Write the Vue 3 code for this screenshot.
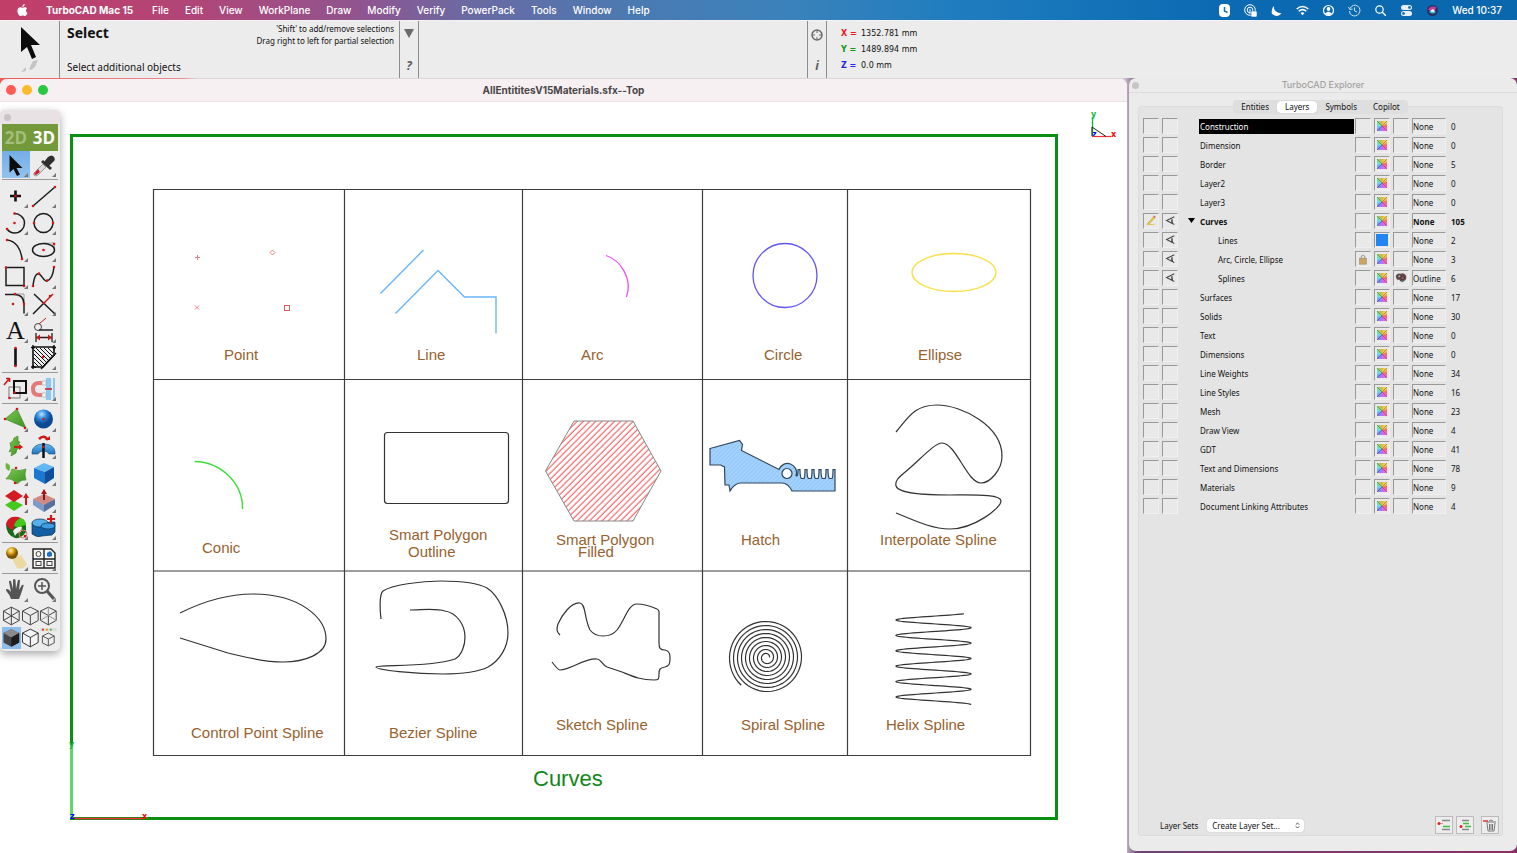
<script setup>
import { ref, computed } from 'vue'

const menus = ['File', 'Edit', 'View', 'WorkPlane', 'Draw', 'Modify', 'Verify', 'PowerPack', 'Tools', 'Window', 'Help']

const coords = [
    { axis: 'X', value: '1352.781 mm', color: 'red' },
    { axis: 'Y', value: '1489.894 mm', color: 'green' },
    { axis: 'Z', value: '0.0 mm', color: 'blue' }
]

const tabs = ['Entities', 'Layers', 'Symbols', 'Copilot']
const activeTab = ref('Layers')
const selectedLayer = ref('Construction')
const selectedTool = ref('Select')
const layerSet = ref('create')

//Layer tree, flattened
const layers = [
    { name: 'Construction', count: 0 },
    { name: 'Dimension', count: 0 },
    { name: 'Border', count: 5 },
    { name: 'Layer2', count: 0 },
    { name: 'Layer3', count: 0 },
    { name: 'Curves', count: 105, open: true, edit: true, visible: true },
    { name: 'Lines', count: 2, child: true, visible: true, solid: true },
    { name: 'Arc, Circle, Ellipse', count: 3, child: true, visible: true, locked: true },
    { name: 'Splines', count: 6, child: true, visible: true, material: true, style: 'Outline' },
    { name: 'Surfaces', count: 17 },
    { name: 'Solids', count: 30 },
    { name: 'Text', count: 0 },
    { name: 'Dimensions', count: 0 },
    { name: 'Line Weights', count: 34 },
    { name: 'Line Styles', count: 16 },
    { name: 'Mesh', count: 23 },
    { name: 'Draw View', count: 4 },
    { name: 'GDT', count: 41 },
    { name: 'Text and Dimensions', count: 78 },
    { name: 'Materials', count: 9 },
    { name: 'Document Linking Attributes', count: 4 }
]

//Captions in drawing units
const captions = [
    { x: 224, y: 360, text: 'Point' },
    { x: 417, y: 360, text: 'Line' },
    { x: 581, y: 360, text: 'Arc' },
    { x: 764, y: 360, text: 'Circle' },
    { x: 918, y: 360, text: 'Ellipse' },
    { x: 202, y: 553, text: 'Conic' },
    { x: 389, y: 540, text: 'Smart Polygon' },
    { x: 408, y: 557, text: 'Outline' },
    { x: 556, y: 545, text: 'Smart Polygon' },
    { x: 578, y: 557, text: 'Filled' },
    { x: 741, y: 545, text: 'Hatch' },
    { x: 880, y: 545, text: 'Interpolate Spline' },
    { x: 191, y: 738, text: 'Control Point Spline' },
    { x: 389, y: 738, text: 'Bezier Spline' },
    { x: 556, y: 730, text: 'Sketch Spline' },
    { x: 741, y: 730, text: 'Spiral Spline' },
    { x: 886, y: 730, text: 'Helix Spline' }
]

const toPath = pts => 'M' + pts.map(p => p[0].toFixed(2) + ' ' + p[1].toFixed(2)).join('L')

const spiral = computed(() => {
    const pts = []
    const end = Math.PI * 17 + 0.88
    for (let a = 0; a <= end; a += 0.12) {
        const r = 3 + 4 * a / (2 * Math.PI)
        pts.push([766.5 + r * Math.cos(a), 657.5 - r * Math.sin(a)])
    }
    return toPath(pts)
})

const helix = computed(() => {
    const pts = []
    for (let t = 0.1; t <= 6.001; t += 0.02) {
        pts.push([933.5 + 37.5 * Math.cos(t * 2 * Math.PI), 612.3 + 15.4 * t])
    }
    return toPath(pts)
})

//Red handle used all over the tool icons
const dot = (x, y) => `<circle cx="${x}" cy="${y}" r="1.3" fill="#d01818"/>`
const ink = 'fill="none" stroke="#1c1c1c" stroke-width="1.5"'

const toolGroups = [
    [
        { name: 'Select', art: '<path d="M7.500 4v17.500l4-3.500 3.500 7 3-1.500-3.500-6.500h6z" fill="#0c0c0c"/>' },
        { name: 'Eyedropper', art: '<path d="M5 21l8-8 3 3-8 8q-3 2-4 0-1-1 1-3z" fill="#d9d9d9" stroke="#777" stroke-width=".7"/><path d="M4 23l4-5 2 3-4 3z" fill="#c8202c"/><path d="M11 11l2-2 9 8-2 2z" fill="#333"/><path d="M14 11l4-5q4-3 6 0 2 3-1 5l-5 5z" fill="#2e2e2e"/>' }
    ],
    [
        { name: 'Point', art: '<path d="M13.500 8.500v11M8 14h11" stroke="#111" stroke-width="2.600"/>' + dot(13.5, 14) },
        { name: 'Line', art: `<path d="M3 24L25 5" ${ink}/>` + dot(3, 24) + dot(25, 5) },
        { name: 'Arc', art: `<path d="M12.500 4.500c5 0 10 4 10 9.500s-4 10-10 10c-4 0-6-2-7.500-4" ${ink}/>` + dot(12.5, 4.500) + dot(5, 20) + dot(12.5, 14) },
        { name: 'Circle', art: `<circle cx="13.500" cy="14" r="9.500" ${ink}/>` + dot(4, 14) + dot(23, 14) },
        { name: 'Conic', art: `<path d="M5 4c9 1 14 9 15 19" ${ink}/>` + dot(5, 4) + dot(20, 23) },
        { name: 'Ellipse', art: `<path d="M14 7h10.500v7" fill="none" stroke="#999" stroke-width=".8"/><ellipse cx="13.500" cy="14" rx="11" ry="6.500" ${ink}/>` + dot(13.5, 14) + dot(24, 8) },
        { name: 'Rectangle', art: `<rect x="4" y="4.500" width="18" height="18" ${ink}/>` + dot(4, 4.500) + dot(22, 23) },
        { name: 'Spline', art: `<path d="M3 23c1-9 3-13 6-12s5 8 8 7 6-5 7-14" ${ink}/>` + dot(3, 23) + dot(9, 10.500) + dot(17, 17.500) + dot(24, 4) },
        { name: 'Fillet', art: `<path d="M14 4h8v7" fill="none" stroke="#999"/><path d="M3 4.500h9q10 0 10 10v9" ${ink}/>` + dot(13, 4) + dot(22, 14) + dot(11, 14) },
        { name: 'Trim', art: `<path d="M4 4l21 20M3 24l11-11" ${ink}/><path d="M14 13l9-9" stroke="#d01818" stroke-width="1.500"/>` + dot(14, 13) + dot(20, 6) },
        { name: 'Text', art: '<text x="4" y="22" font-family="Liberation Serif, serif" font-size="26" fill="#111">A</text>' },
        { name: 'Dimension', art: '<circle cx="8" cy="10" r="3.500" fill="none" stroke="#444"/><path d="M9 7l7-6" stroke="#d01818"/><path d="M9 13h14M6 16v9M22 16v9M6 20.500h16" fill="none" stroke="#222" stroke-width="1.300"/><path d="M6 20.500l4-3v6zM22 20.500l-4-3v6z" fill="#d01818"/>' },
        { name: 'Wall', art: '<path d="M13.500 4v18" stroke="#111" stroke-width="2.600"/>' + dot(13.5, 4) + dot(13.5, 22) },
        { name: 'Hatch', art: '<path d="M3 3h21v8L13 23H3z" fill="#eee" stroke="#111" stroke-width="1.600"/><path d="M4 18l5 5M4 14l8 8M4 10l11 11M4 6l13 13M6 4l13 13M10 4l11 11M14 4l8 8M18 4l5 5" stroke="#111"/><path d="M1 3.500h4M3 1v4M1 23h5M3 21v4M24 1v5M22 3.500h4M11 25l15-16" stroke="#111" stroke-width="1.400"/>' + dot(13, 13) }
    ],
    [
        { name: 'Move', art: '<rect x="7" y="12" width="11" height="11" fill="none" stroke="#777"/><rect x="12" y="6" width="12" height="12" fill="none" stroke="#111" stroke-width="2"/><path d="M2 10l5-6M7.500 7V3.500H4" fill="none" stroke="#d01818" stroke-width="1.600"/>' + dot(12.5, 17.500) + dot(7.500, 23) },
        { name: 'Snap', art: '<path d="M16 3h5v22h-5zM23 3h2v22h-2z" fill="#8cc6f2"/><path d="M12 8H9q-6 0-6 6t6 6h3" fill="none" stroke="#e37979" stroke-width="4"/><path d="M12 6h4v4h-4zM12 18h4v4h-4z" fill="#f4f4f4" stroke="#aaa" stroke-width=".6"/><path d="M15 14h7" stroke="#d01818" stroke-width="1.500"/>' }
    ],
    [
        { name: 'Facet', art: '<path d="M3 13L15 3l9 19z" fill="url(#gGreen)" stroke="#3c7f20" stroke-width=".6"/>' + dot(3, 13) + dot(15, 3) + dot(23, 22) },
        { name: 'Sphere', art: '<circle cx="13.500" cy="13" r="9.500" fill="url(#gBall)"/>' + dot(13.5, 13) },
        { name: 'Extrude', art: '<path d="M8 10l3-2 1-3 4-2v5l2 1-2 3 2 3-3 1-1 4-5 3 1-5-3 1 2-4z" fill="url(#gGreen)" stroke="#3c7f20" stroke-width=".6"/><path d="M12 14h6" stroke="#d01818" stroke-width="2"/><path d="M17 11l4 3-4 3z" fill="#d01818"/>' },
        { name: 'Revolve', art: '<path d="M2 19q1-8 11.500-8T25 19v2h-6q-2-3-5.500-3T8 21H2z" fill="url(#gBlue)" stroke="#174c7c" stroke-width=".6"/><path d="M13.500 10v15" stroke="#111" stroke-width="2.500"/><path d="M9 6q5-5 9 1" fill="none" stroke="#d01818" stroke-width="2.500"/><path d="M15 7h5V3z" fill="#d01818"/>' + dot(13.5, 14) },
        { name: 'Loft', art: '<path d="M4 3q5 1 4 6l-1 2q-5-3-3-8z" fill="#6ab83c"/><path d="M4 19q5-5 6-10 7 3 14 0-2 5 0 11-4-1-9 4-5-6-11-5z" fill="url(#gGreen)" stroke="#3c7f20" stroke-width=".6"/>' + dot(14, 8) + dot(13, 23) },
        { name: 'Box', art: '<path d="M4 8l10-5 10 4-9 5z" fill="#62b8f4"/><path d="M4 8l11 4v12L4 18z" fill="#1c78cf"/><path d="M24 7l-9 5v12l9-6z" fill="#0d4f9c"/>' },
        { name: 'Offset Surface', art: '<path d="M3 18l8-5 10 5-9 6z" fill="#45c91e"/><path d="M3 9l9-6 9 6-9 6z" fill="#d11a22"/><path d="M24 18V9" stroke="#d01818" stroke-width="2"/><path d="M21 11l3-5 3 5z" fill="#d01818"/>' },
        { name: 'Push Pull', art: '<path d="M3 12l11 5v8L3 18z" fill="#7d9ccc"/><path d="M25 12l-11 5v8l11-7z" fill="#54719f"/><path d="M3 12l11-5 11 5-11 6z" fill="#d18a82"/><path d="M14 13V6" stroke="#8c1414" stroke-width="2"/><path d="M11 7l3-5 3 5z" fill="#a31616"/>' },
        { name: 'Shell', art: '<path d="M4 10l14-6q6 2 6 8v6q-5 7-11 6-9-3-9-14z" fill="#1a6b18"/><path d="M4 10q1-5 6-7 5-1 9 1-6 2-7 8l-1 4q-4-1-7-6z" fill="#d11a22"/><path d="M12 12q1-6 7-8 5 2 5 7-4 0-6 3z" fill="#45c91e"/><path d="M11 17q4-5 9-4l-1 5q-4 0-6 4z" fill="#eee"/><circle cx="21" cy="20" r="4" fill="none" stroke="#d77"/>' + dot(23, 22) },
        { name: 'Boolean Add', art: '<path d="M2 9v11q5 4 10 2l10-1 3-3V8z" fill="#145fa3" stroke="#0b3054" stroke-width=".7"/><ellipse cx="10" cy="9" rx="8" ry="4" fill="#56b0ec" stroke="#0b3054" stroke-width=".7"/><ellipse cx="18" cy="12" rx="7" ry="3" fill="#3f9ce0" stroke="#0b3054" stroke-width=".7"/><path d="M21 1v8M17 5h8" stroke="#d01818" stroke-width="2.200"/>' }
    ],
    [
        { name: 'Light', art: '<path d="M10 14l9-4 6 9q-3 6-10 4z" fill="#ecd9a2"/><circle cx="10" cy="8" r="6" fill="url(#gGold)"/>' },
        { name: 'Draw View', art: '<path d="M3 4h18l4 4v15H3zM14 4v19M3 14h22" fill="#f4f4f4" stroke="#222" stroke-width="1.400"/><circle cx="8.500" cy="9" r="2.500" fill="none" stroke="#444"/><rect x="6" y="16.500" width="5" height="4" fill="none" stroke="#444"/><rect x="17" y="16.500" width="5" height="4" fill="none" stroke="#444"/><path d="M17 8l3-2 2 2v3l-3 1-2-1z" fill="#1c6fc2"/>' }
    ],
    [
        { name: 'Pan', art: '<path d="M9 23q-1-4-4-7-2-3 0-3 2 0 4 3L7 6q0-2 2-1l2 8V4q1-2 2.500 0l.5 9 2-9q2-1 2 1l-1 9 3-5q2-1 1.500 1L19 18l-2 5z" fill="#555"/>' },
        { name: 'Zoom', art: '<circle cx="12" cy="10" r="7" fill="#eee" stroke="#555" stroke-width="2"/><path d="M17 15l7 8" stroke="#555" stroke-width="3.200"/><path d="M12 6v8M8 10h8" stroke="#555" stroke-width="1.500"/>' }
    ]
]

const hexa = '<path d="M9.500 2l8 4v9.500l-8 4.500-8-4.500V6z" '
const inner = 'M1.500 6l8 4.500 8-4.500M9.500 10.500V20'
const views = [
    { name: 'Wireframe', art: hexa + 'fill="none" stroke="#444"/><path d="M9.500 2v18M1.500 6l16 9.500M17.500 6l-16 9.500" stroke="#444"/>' },
    { name: 'Hidden Line', art: hexa + `fill="none" stroke="#444"/><path d="${inner}" fill="none" stroke="#444"/>` },
    { name: 'Dashed Hidden', art: hexa + `fill="none" stroke="#444"/><path d="${inner}" fill="none" stroke="#444"/><path d="M9.500 2v8M1.500 15.500l8-5 8 5" fill="none" stroke="#999"/>` },
    { name: 'Shaded', on: true, art: hexa + 'fill="#444"/><path d="M1.500 6l8-4 8 4-8 4.500z" fill="#8b8b8b"/><path d="M17.500 6v9.500l-8 4.500v-9.500z" fill="#1e1e1e"/>' },
    { name: 'Clean', art: hexa + `fill="#f4f4f4" stroke="#333"/><path d="${inner}" fill="none" stroke="#333"/>` },
    { name: 'Render Options', art: '<path d="M1 1h17v3H1z" fill="#ddd"/><path d="M3 2.500h2" stroke="#d33" stroke-width="2"/><path d="M7 2.500h2" stroke="#e90" stroke-width="2"/><path d="M11 2.500h2" stroke="#4b4" stroke-width="2"/><path d="M9.500 6l6 3v7l-6 3-6-3V9zM3.500 9l6 3 6-3M9.500 12v7" fill="none" stroke="#555"/>' }
]
</script>

<template>
    <div class="desktop">
        <header class="menubar">
            <svg class="apple" viewBox="0 0 12 14" aria-label="Apple">
                <path d="M8.300 0q.1 1.500-.8 2.400T5.700 3.300q-.1-1.300.8-2.300T8.300 0zM6 4c.7 0 1.400-.6 2.600-.6 1 0 1.900.5 2.400 1.300-2 1.200-1.700 4 .5 4.900-.5 1.500-1.600 3.400-2.900 3.400-.9 0-1.300-.5-2.400-.5s-1.500.5-2.300.5C2.300 13 .5 10 .5 7.500c0-2.600 1.600-4 3.100-4C4.700 3.500 5.400 4 6 4z" fill="#fff" />
            </svg>
            <strong>TurboCAD Mac 15</strong>
            <nav>
                <a v-for="m in menus" :key="m" href="#" @click.prevent>{{ m }}</a>
            </nav>
            <div class="status">
                <svg viewBox="0 0 13 13"><rect x="1" y="0" width="11" height="13" rx="4" fill="#fff" /><path d="M6.500 3v4l3 1.500" fill="none" stroke="#1a70b5" stroke-width="1.500" /></svg>
                <svg viewBox="0 0 13 13"><circle cx="6" cy="6" r="5.300" fill="none" stroke="#fff" /><circle cx="6" cy="6" r="2.800" fill="none" stroke="#fff" /><path d="M6 5v5" stroke="#fff" /><rect x="7" y="7" width="6" height="6" rx="1" fill="#fff" stroke="#1a70b5" stroke-width=".6" /></svg>
                <svg viewBox="0 0 13 13"><path d="M4 2q-1 6 7.500 7.500-3 3.500-7 2T2 6q.2-2.500 2-4z" fill="#fff" /></svg>
                <svg viewBox="0 0 13 13"><path d="M.7 5q5.800-5 11.600 0M2.700 7.300q3.800-3.300 7.600 0" fill="none" stroke="#fff" stroke-width="1.500" /><path d="M4.500 9q2-1.600 4 0l-2 2.300z" fill="#fff" /></svg>
                <svg viewBox="0 0 13 13"><circle cx="6.500" cy="6.500" r="5" fill="none" stroke="#fff" stroke-width="1.200" /><circle cx="6.500" cy="5" r="1.900" fill="#fff" /><path d="M3 9.800q3.500-4 7 0-3.500 2.500-7 0z" fill="#fff" /></svg>
                <svg viewBox="0 0 13 13"><path d="M2 4.500q3-5 7.500-2.500 4 3 1.500 7.500-3.500 4-7.500 1.500Q1.500 9.500 1.500 7M.5 3l1.300 2.500L4.500 5M6.500 3.500v3.300L9 8" fill="none" stroke="#d4e6f5" stroke-width="1" /></svg>
                <svg viewBox="0 0 13 13"><circle cx="5.500" cy="5.500" r="3.700" fill="none" stroke="#fff" stroke-width="1.200" /><path d="M8.300 8.300l3.500 3.500" stroke="#fff" stroke-width="1.400" /></svg>
                <svg viewBox="0 0 13 13"><rect x="1" y="1" width="11" height="5" rx="2.500" fill="#e6f0f8" /><circle cx="9.500" cy="3.500" r="1.400" fill="#1a70b5" /><rect x="1" y="7" width="11" height="5" rx="2.500" fill="#e6f0f8" /><circle cx="3.500" cy="9.500" r="1.400" fill="#1a70b5" /></svg>
                <svg viewBox="0 0 13 13"><circle cx="6.500" cy="6.500" r="5.500" fill="#2c2f63" /><path d="M2 6q2-5 8-3 0 4-4 4z" fill="#c4409c" /><path d="M3 8q3-3 7 0-3 3-7 0z" fill="#44b7d8" /><path d="M4 7l3-2 2 2-2 1z" fill="#fff" /></svg>
                <span>Wed 10:37</span>
            </div>
        </header>

        <section class="infobar">
            <div class="tool-preview">
                <svg viewBox="0 0 24 52">
                    <path d="M3 6v25l6-5 5 12 4-2-5-12h9z" fill="#0c0c0c" />
                    <path d="M11 48l4-8 5-1-3 7-4 3zM3 51l5-5v4z" fill="#c4c4c4" />
                </svg>
            </div>
            <div class="tool-info">
                <div>
                    <h1>Select</h1>
                    <p class="prompt">Select additional objects</p>
                </div>
                <p class="hint">'Shift' to add/remove selections<br>Drag right to left for partial selection</p>
            </div>
            <div class="strip">
                <button aria-label="Options"><svg viewBox="0 0 10 9"><path d="M0 0h10L5 9z" fill="#6b6b6b" /></svg></button>
                <button class="glyph">?</button>
            </div>
            <div class="blank"></div>
            <div class="strip">
                <button aria-label="Coordinates"><svg class="target" viewBox="0 0 12 12"><circle cx="6" cy="6" r="5" fill="none" stroke="#6b6b6b" stroke-width="1.500" /><path d="M6 1v3M6 8v3M1 6h3M8 6h3" stroke="#6b6b6b" /></svg></button>
                <button class="glyph">i</button>
            </div>
            <dl class="coords">
                <div v-for="c in coords" :key="c.axis">
                    <dt :class="c.color">{{ c.axis }} =</dt>
                    <dd>{{ c.value }}</dd>
                </div>
            </dl>
        </section>

        <main class="workspace">
            <section class="document">
                <div class="titlebar">
                    <span class="lights"><i class="close"></i><i class="min"></i><i class="max"></i></span>
                    <h2>AllEntititesV15Materials.sfx--Top</h2>
                </div>
                <svg class="drawing" viewBox="0 102 1127 751">
                    <defs>
                        <pattern id="redHatch" width="4.400" height="4.400" patternUnits="userSpaceOnUse" patternTransform="rotate(45)">
                            <path d="M2 0v5" stroke="#f25c5c" stroke-width="1.100" />
                        </pattern>
                        <pattern id="blueHatch" width="3" height="3" patternUnits="userSpaceOnUse" patternTransform="rotate(45)">
                            <rect width="3" height="3" fill="#a9d5fd" />
                            <path d="M1 0v3" stroke="#80bbf5" stroke-width=".8" />
                        </pattern>
                    </defs>

                    <!-- border -->
                    <rect x="71.500" y="135.500" width="985" height="683" fill="none" stroke="#0a8f12" stroke-width="3" />
                    <path d="M71.500 745v73" stroke="#5fd868" stroke-width="3" />
                    <path d="M73 818.500h70" stroke="#f0323c" stroke-width="1.500" />
                    <g class="axis">
                        <text x="69" y="747" fill="#17b93a">y</text>
                        <text x="142" y="819" fill="red">x</text>
                        <text x="70" y="819" fill="blue">z</text>
                        <text x="1091" y="117" fill="#17b93a">y</text>
                        <text x="1111" y="137" fill="red">x</text>
                        <text x="1092" y="137" fill="blue">z</text>
                    </g>
                    <path d="M1092.500 136v-19" stroke="#17b93a" stroke-width="1.400" />
                    <path d="M1092 136.500h19" stroke="#e33" stroke-width="1.200" />
                    <path d="M1092 136v-9l14 9.500" fill="none" stroke="#222" />

                    <!-- cells -->
                    <path d="M153.500 189.500h877v566h-877zM153.500 379.500h877M153.500 571h877M344.500 189v566M522.500 189v566M702.500 189v566M847.500 189v566" fill="none" stroke="#3d3d3d" stroke-width="1.200" />

                    <g fill="none" stroke="#f08080">
                        <path d="M195 257.500h5M197.500 255v5M195 305.500l4 4M199 305.500l-4 4" />
                        <path d="M272.500 250l2.500 2.500-2.500 2.500-2.500-2.500z" />
                        <rect x="284.500" y="305.500" width="5" height="5" stroke="#e05a5a" />
                    </g>
                    <path d="M380.500 293.500l43-43.500M395.500 313.500l42.500-43 26.500 26.500h31.500v36.500" fill="none" stroke="#6bb5f8" stroke-width="1.400" />
                    <path d="M606 255.500C620 260 633 278 626.500 297" fill="none" stroke="#f24cf0" stroke-width="1.300" />
                    <circle cx="785" cy="275.500" r="32" fill="none" stroke="#6355f0" stroke-width="1.300" />
                    <ellipse cx="954" cy="272.500" rx="42" ry="19" fill="none" stroke="#fbe04a" stroke-width="1.500" />

                    <path d="M194.500 461.500C222 462 243 484 242.500 509" fill="none" stroke="#38e038" stroke-width="1.400" />
                    <rect x="384.500" y="432.500" width="124" height="71" rx="3" fill="none" stroke="#333" stroke-width="1.200" />
                    <path d="M574 421h59l28 50-28 50h-59l-28.500-50z" fill="url(#redHatch)" stroke="#888" />
                    <path fill-rule="evenodd" fill="url(#blueHatch)" stroke="#31475c" stroke-width="1.200" d="M710 448.500l29.500-8 3 4-1 6L779 469.500a9 9 0 0 1 17 6q2 2 2-6h2q0 8 1.500 9h2.500q1-1 1-9h2q0 8 1.500 9h2.500q1-1 1-9h2q0 8 1.500 9h2.500q1-1 1-9h2q0 8 1.500 9h2.500q1-1 1-9h2q0 8 1.500 9h2.500q1-1 1-9h2v21.500h-43q-4-8-10-8h-42q-6 1-10 8l-1-6h-4l-.5-18-4-2H710zM782 473.500a5 5 0 1 0 10 0a5 5 0 1 0-10 0z" />

                    <g class="curve">
                        <path d="M896 432C908 418 914 405 937 405C962 405 1002 426 1002 456C1002 470 990 483 981 483C967 483 956 443 942 443C934 443 918 462 904 473C898 478 895 481 896 486C899 494 925 495 950 495C975 495 1001 494 1001 501C1001 508 974 529 950 529C932 529 913 520 896 513" />
                        <path d="M180 613C202 602 228 594 253 594C300 594 326 618 326 639C326 654 305 662 283 662C262 662 245 657 228 653L180 638" />
                        <path d="M381 619C380 612 379 594 383 591C392 585 420 581 441 581C462 581 478 583 487 588C498 595 508 615 508 633C508 648 499 661 488 667C478 672 460 674 443 674C415 674 376 670 376 667C376 664 430 668 455 659C462 655 465 645 465 637C465 625 457 613 445 611C435 608 422 610 410 610" />
                        <path d="M560 635C557 632 556 630 558 624C562 615 571 602 580 603C586 604 584 618 590 630C593 634 597 636 603 636C609 636 613 635 617 630C625 620 628 604 637 604C644 604 650 606 657 609C660 610 659 613 659 616V643C659 648 660 650 665 650C670 651 670 655 670 659C670 664 669 666 665 667C660 668 659 669 659 674C659 679 659 680 654 680C640 680 632 676 622 672L607 667C602 665 601 659 597 659C584 658 571 670 560 670Q558 670 552 662" />
                        <path :d="spiral" />
                        <path :d="helix" />
                    </g>

                    <g class="caption">
                        <text v-for="(c, i) in captions" :key="i" :x="c.x" :y="c.y">{{ c.text }}</text>
                    </g>
                    <text class="sheet-name" x="533" y="786">Curves</text>
                </svg>

                <!-- floating tool palette -->
                <aside class="palette">
                    <svg class="defs" width="0" height="0">
                        <defs>
                            <linearGradient id="gGreen" x2="1" y2="1"><stop stop-color="#7cc950" /><stop offset="1" stop-color="#3d8f22" /></linearGradient>
                            <linearGradient id="gBlue" x2="0" y2="1"><stop stop-color="#5fb9f2" /><stop offset="1" stop-color="#2474bd" /></linearGradient>
                            <radialGradient id="gBall" cx=".4" cy=".25"><stop stop-color="#bfe3fb" /><stop offset=".5" stop-color="#2b8be0" /><stop offset="1" stop-color="#0d4a94" /></radialGradient>
                            <radialGradient id="gGold" cx=".4" cy=".3"><stop stop-color="#fff3b0" /><stop offset=".5" stop-color="#e0a91c" /><stop offset="1" stop-color="#7a5200" /></radialGradient>
                        </defs>
                    </svg>
                    <div class="grip"><i></i></div>
                    <div class="modes">
                        <button class="off">2D</button>
                        <button>3D</button>
                    </div>
                    <div v-for="(group, g) in toolGroups" :key="g" class="tools">
                        <button
                            v-for="t in group"
                            :key="t.name"
                            :aria-label="t.name"
                            :class="{ active: t.name === selectedTool }"
                            @click="selectedTool = t.name"
                        >
                            <svg viewBox="0 0 28 27">
                                <g v-html="t.art"></g>
                                <path d="M26 22v4h-4z" fill="#777" />
                            </svg>
                        </button>
                    </div>
                    <div class="views">
                        <button v-for="v in views" :key="v.name" :aria-label="v.name" :class="{ active: v.on }">
                            <svg viewBox="0 0 19 22" v-html="v.art"></svg>
                        </button>
                    </div>
                </aside>
            </section>

            <section class="explorer">
                <div class="ex-title"><i></i><h2>TurboCAD Explorer</h2></div>
                <div class="panel">
                    <div class="tabs">
                        <button v-for="t in tabs" :key="t" :class="{ active: t === activeTab }" @click="activeTab = t">{{ t }}</button>
                    </div>

                    <table>
                        <colgroup>
                            <col class="c-box"><col class="c-box"><col class="c-tri"><col class="c-name">
                            <col class="c-box"><col class="c-box"><col class="c-box"><col class="c-style"><col>
                        </colgroup>
                        <tbody>
                            <tr v-for="l in layers" :key="l.name" :class="{ current: l.edit }" @click="selectedLayer = l.name">
                                <td>
                                    <span class="box">
                                        <svg v-if="l.edit" viewBox="0 0 14 14"><path d="M2 11h9" stroke="#ddb92e" /><path d="M3 10l7-8 1.500 1.500-7 7z" fill="#f0cf34" stroke="#a58a20" stroke-width=".5" /><path d="M10 1l2 2" stroke="#d55" stroke-width="1.500" /></svg>
                                    </span>
                                </td>
                                <td>
                                    <span class="box">
                                        <svg v-if="l.visible" viewBox="0 0 14 14"><path d="M12 2L3 6.500l9 4.500M10 3q-2 3.500 0 7M9.500 5.500v2.500" fill="none" stroke="#444" stroke-width="1.200" /></svg>
                                    </span>
                                </td>
                                <td><svg v-if="l.open" class="tri" viewBox="0 0 7 5"><path d="M0 0h7L3.500 5z" /></svg></td>
                                <td><span class="name" :class="{ child: l.child, picked: l.name === selectedLayer }">{{ l.name }}</span></td>
                                <td>
                                    <span class="box">
                                        <svg v-if="l.locked" viewBox="0 0 14 14"><path d="M5 7V4q2-3 4 0v3" fill="none" stroke="#999" stroke-width="1.200" /><rect x="3" y="6" width="8" height="7" fill="#c9a562" stroke="#8d7446" stroke-width=".5" /></svg>
                                    </span>
                                </td>
                                <td><span class="box"><i :class="l.solid ? 'solid' : 'wheel'"></i></span></td>
                                <td>
                                    <span class="box">
                                        <svg v-if="l.material" viewBox="0 0 14 14"><path d="M1 4q2-3 5-2 4-2 7 2 1 5-3 7-4 1-5-2-4 1-4-5z" fill="#6b4a4a" /><circle cx="5" cy="5" r="2" fill="#999" stroke="#333" /><circle cx="9" cy="7" r="2" fill="#b05a5a" stroke="#333" /><path d="M8 12l4-3" stroke="#4a9" /></svg>
                                    </span>
                                </td>
                                <td><span class="box wide">{{ l.style || 'None' }}</span></td>
                                <td class="count">{{ l.count }}</td>
                            </tr>
                        </tbody>
                    </table>

                    <footer>
                        <label for="layer-set">Layer Sets</label>
                        <span class="picker">
                            <select id="layer-set" v-model="layerSet">
                                <option value="create">Create Layer Set...</option>
                            </select>
                            <svg viewBox="0 0 6 8"><path d="M1 3l2-2 2 2M1 5l2 2 2-2" fill="none" stroke="#333" /></svg>
                        </span>
                        <span class="actions">
                            <button aria-label="New layer"><svg viewBox="0 0 16 16"><path d="M6 3.500h8M6 12.500h8" stroke="#888" stroke-width="1.500" /><path d="M7 9.500h7" stroke="#3fbf3f" stroke-width="1.500" /><path d="M2 6.500h5" stroke="#c99" /><circle cx="3" cy="6.500" r="1.500" fill="#d22" /></svg></button>
                            <button aria-label="New sublayer"><svg viewBox="0 0 16 16"><path d="M5 3.500h7M5 12.500h7" stroke="#888" stroke-width="1.500" /><path d="M6 6.500h6M8 9.500h6" stroke="#3fbf3f" stroke-width="1.500" /><circle cx="4" cy="9.500" r="1.500" fill="#d22" /></svg></button>
                            <button class="trash" aria-label="Delete layer"><svg viewBox="0 0 16 16"><path d="M4 5h10M5 6l1 8h6l1-8M7.500 7v6M9 7v6M10.500 7v6M7 4q2-2 4 0" fill="none" stroke="#777" /><path d="M1 4h5" stroke="#d33" stroke-width="1.500" /></svg></button>
                        </span>
                    </footer>
                </div>
            </section>
        </main>
    </div>
</template>

<style>
body {
    margin: 0;
    background: #4a2a63;
}
</style>

<style scoped>
.desktop {
    min-height: 100vh;
    display: flex;
    flex-direction: column;
    overflow: hidden;
    font-family: "Noto Sans", "DejaVu Sans", sans-serif;
    font-size: 8px;
    color: #111;
    background: linear-gradient(90deg, #ef5b58 0, #ec8d92 12%, #d9d5da 13%, #d9d5da 74%, #6d4475 75%, #8a2f63 100%);
}

* { box-sizing: border-box; }

h1, h2, p, dl, dd { margin: 0; }

button {
    border: 0;
    padding: 0;
    background: none;
    font: inherit;
    color: inherit;
}

svg { display: block; }

/* menu bar */
.menubar {
    height: 20px;
    padding: 0 15px 0 17px;
    display: flex;
    align-items: center;
    font-family: Inter, "Open Sans", sans-serif;
    font-size: 10px;
    color: #fff;
    background: linear-gradient(90deg, #c23e68 0, #b04678 13%, #8f5590 24%, #6a6aa3 31%, #4a7ab2 42%, #3a82bb 52%, #1f7dbf 63%, #0b6ab2 80%, #0a67ae 100%);
}

.apple {
    width: 11px;
    height: 13px;
    margin-right: 18px;
}

.menubar strong { margin-right: 19px; }

.menubar nav {
    display: flex;
    gap: 16px;
    font-weight: 500;
}

.menubar a {
    color: inherit;
    text-decoration: none;
}

.status {
    margin-left: auto;
    display: flex;
    align-items: center;
    gap: 13px;
    font-weight: 500;
}

.status svg {
    width: 13px;
    height: 13px;
}

/* info bar */
.infobar {
    height: 58px;
    display: flex;
    background: #ececec;
    border-top: 1px solid #f6f2f4;
}

.tool-preview {
    width: 60px;
    padding-left: 18px;
    border-right: 1px solid #8c8c8c;
}

.tool-preview svg {
    width: 24px;
    height: 52px;
}

.tool-info {
    width: 339px;
    padding: 2px 5px 0 7px;
    display: flex;
    justify-content: space-between;
}

.tool-info h1 {
    font: bold 14px/20px "Noto Sans", sans-serif;
}

.prompt {
    margin-top: 16px;
    font-size: 10px;
    line-height: 16px;
}

.hint {
    text-align: right;
    line-height: 12px;
}

.strip {
    width: 20px;
    padding: 8px 0 5px;
    display: flex;
    flex-direction: column;
    align-items: center;
    justify-content: space-between;
    border: solid #8c8c8c;
    border-width: 0 1px;
}

.strip svg {
    width: 10px;
    height: 9px;
}

.strip svg.target {
    width: 12px;
    height: 12px;
}

.glyph {
    font: italic bold 12px/14px "Noto Sans", sans-serif;
    color: #5c5c5c;
}

.blank { width: 388px; }

.coords {
    padding: 5px 0 0 14px;
    font-family: "DejaVu Sans", sans-serif;
    line-height: 16px;
}

.coords div { display: flex; }

.coords dt {
    width: 20px;
    font-weight: bold;
}

.red { color: #f01414; }
.green { color: #109610; }
.blue { color: #2a1ef0; }

/* windows */
.workspace {
    flex: 1;
    display: flex;
    gap: 2px;
}

.document {
    position: relative;
    flex: 1;
    min-width: 0;
    margin-top: 1px;
    background: #fff;
    border-radius: 7px 7px 0 0;
}

.titlebar {
    height: 23px;
    display: flex;
    align-items: center;
    justify-content: center;
    background: #f7f0f3;
    border-bottom: 1px solid #e8e2e4;
    border-radius: 7px 7px 0 0;
}

.titlebar h2 {
    font: 700 10px/16px Inter, "Open Sans", sans-serif;
    color: #4a4648;
}

.lights {
    position: absolute;
    left: 6px;
    display: flex;
    gap: 6px;
}

.lights i {
    width: 10px;
    height: 10px;
    border-radius: 50%;
}

.close { background: #fe5b52; }
.min { background: #fdbb2c; }
.max { background: #28c83f; }

.drawing {
    width: 100%;
    height: auto;
}

.curve path {
    fill: none;
    stroke: #333;
    stroke-width: 1.2;
}

.caption, .sheet-name {
    font-family: "Liberation Sans", Arial, sans-serif;
}

.caption {
    font-size: 15px;
    fill: #98622f;
}

.sheet-name {
    font-size: 22px;
    fill: #11861a;
}

.axis {
    font: bold 8px "DejaVu Sans", sans-serif;
}

/* palette */
.palette {
    position: absolute;
    left: 0;
    top: 31px;
    width: 60px;
    padding: 0 2px 2px;
    background: #ececec;
    border-radius: 5px;
    box-shadow: 0 3px 9px rgba(0, 0, 0, .35);
}

.defs { position: absolute; }

.grip {
    height: 14px;
    margin: 0 -2px;
    padding: 4px;
    background: #e9e2e5;
    border-radius: 5px 5px 0 0;
}

.grip i, .ex-title i {
    display: block;
    width: 7px;
    height: 7px;
    border-radius: 50%;
    background: #c9c4c6;
}

.modes {
    height: 27px;
    display: grid;
    grid-template-columns: 1fr 1fr;
    background: #74993a;
    color: #fff;
    font: bold 17px/27px "Open Sans", sans-serif;
}

.modes .off { color: #a4be7c; }

.tools {
    display: grid;
    grid-template-columns: 28px 28px;
}

.tools + .tools {
    margin-top: 1px;
    padding-top: 2px;
    border-top: 1px solid #999;
}

.tools svg {
    width: 28px;
    height: 27px;
    overflow: visible;
}

.tools .active {
    background: linear-gradient(#74aee6, #92c2ee);
}

.views {
    margin-top: 2px;
    display: grid;
    grid-template-columns: repeat(3, 1fr);
}

.views svg {
    width: 100%;
    height: 22px;
}

.views .active { background: #8dbdea; }

/* explorer */
.explorer {
    width: 388px;
    margin-bottom: 2px;
    display: flex;
    flex-direction: column;
    background: #ebebeb;
    border-radius: 7px;
}

.ex-title {
    position: relative;
    height: 15px;
    display: flex;
    align-items: center;
    justify-content: center;
    border-bottom: 1px solid #dedcdd;
}

.ex-title i {
    position: absolute;
    left: 3px;
}

.ex-title h2 {
    font: 500 9px/14px Inter, "Open Sans", sans-serif;
    color: #a3a1a2;
}

.panel {
    flex: 1;
    margin: 13px 14px 15px 9px;
    display: flex;
    flex-direction: column;
    background: #e4e4e4;
    border: 1px solid #dcdcdc;
    border-radius: 3px;
}

.tabs {
    height: 14px;
    margin: -7px auto 4px;
    display: flex;
    background: #dedede;
    border-radius: 4px;
}

.tabs button {
    padding: 0 8px;
    line-height: 12px;
    border-radius: 4px;
}

.tabs .active {
    margin: 1px 0;
    background: #fff;
    box-shadow: 0 0 1px #aaa;
}

table {
    width: 350px;
    margin-left: 4px;
    table-layout: fixed;
    border-collapse: collapse;
}

.c-box { width: 19px; }
.c-tri { width: 18px; }
.c-name { width: 156px; }
.c-style { width: 39px; }

tr { height: 19px; }

td {
    padding: 0;
    vertical-align: top;
}

.box {
    width: 16px;
    height: 16px;
    display: block;
    padding: 1px;
    background: #e9e9e9;
    border: 1px solid;
    border-color: #999 #f0f0f0 #f0f0f0 #999;
}

.box svg {
    width: 12px;
    height: 12px;
}

.box.wide {
    width: 34px;
    padding: 0;
    line-height: 16px;
    white-space: nowrap;
}

.wheel, .solid {
    display: block;
    width: 10px;
    height: 10px;
    margin: 1px;
}

.wheel {
    background:
        linear-gradient(45deg, transparent 46%, rgba(110, 50, 50, .45) 47%, rgba(110, 50, 50, .45) 53%, transparent 54%),
        linear-gradient(-45deg, transparent 46%, rgba(110, 50, 50, .45) 47%, rgba(110, 50, 50, .45) 53%, transparent 54%),
        conic-gradient(#f0a848, #ece04c, #f46464, #f466cc, #c06cf8, #6c90fa, #6cdcf4, #70e684, #f0a848);
}

.solid {
    width: 12px;
    height: 12px;
    margin: 0;
    background: #2484f0;
}

.tri {
    width: 7px;
    height: 5px;
    margin: 5px 0 0 7px;
}

.name {
    display: block;
    width: 155px;
    height: 15px;
    margin-top: 1px;
    padding-left: 1px;
    line-height: 15px;
}

.child { padding-left: 19px; }

.picked {
    background: #000;
    color: #fff;
}

.count { line-height: 17px; }

.current { font-weight: bold; }

footer {
    margin: auto 3px 1px 21px;
    display: flex;
    align-items: center;
}

.picker {
    position: relative;
    margin-left: 9px;
}

.picker select {
    appearance: none;
    display: block;
    width: 97px;
    height: 13px;
    padding: 0 5px;
    border: 0;
    border-radius: 3px;
    background: #fff;
    font: inherit;
    color: inherit;
    box-shadow: 0 0 1px #aaa;
}

.picker svg {
    position: absolute;
    right: 4px;
    top: 3px;
    width: 5px;
    height: 7px;
}

.actions {
    margin-left: auto;
    display: flex;
    gap: 3px;
}

.actions button {
    width: 18px;
    height: 18px;
    border: 1px solid #bbb;
    background: #ededed;
}

.actions .trash { margin-left: 4px; }
</style>
